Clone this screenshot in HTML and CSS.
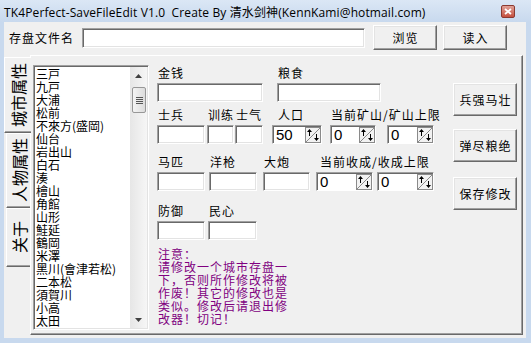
FILE: index.html
```html
<!DOCTYPE html>
<html lang="zh">
<head>
    <meta charset="UTF-8">
    <title>TK4Perfect-SaveFileEdit V1.0</title>
    <link rel="stylesheet" href="styles.css">
</head>
<body>
    <div class="window">
        <div class="titlebar">
            <span class="title">TK4Perfect-SaveFileEdit V1.0&nbsp; Create By 清水剑神(KennKami@hotmail.com)</span>
            <span class="close-btn">
                <svg width="8" height="7" viewBox="0 0 8 7"><path d="M1 1L7 6M7 1L1 6" stroke="#fff" stroke-width="1.8"/></svg>
            </span>
        </div>

        <div class="client">
            <div class="file-row">
                <label class="file-label" for="save-file">存盘文件名</label>
                <input type="text" id="save-file" class="edit file-edit">
                <button class="btn btn-top">浏览</button>
                <button class="btn btn-top">读入</button>
            </div>

            <div class="tab-control">
                <div class="tab-strip">
                    <div class="tab tab-city active"><span>城市属性</span></div>
                    <div class="tab tab-person"><span>人物属性</span></div>
                    <div class="tab tab-about"><span>关于</span></div>
                </div>

                <div class="tab-page">
                    <div class="listbox">
                        <ul class="city-list">
                            <li>三戸</li>
                            <li>九戸</li>
                            <li>大浦</li>
                            <li>松前</li>
                            <li>不來方(盛岡)</li>
                            <li>仙台</li>
                            <li>岩出山</li>
                            <li>白石</li>
                            <li>湊</li>
                            <li>檜山</li>
                            <li>角館</li>
                            <li>山形</li>
                            <li>鮭延</li>
                            <li>鶴岡</li>
                            <li>米澤</li>
                            <li>黑川(會津若松)</li>
                            <li>二本松</li>
                            <li>須賀川</li>
                            <li>小高</li>
                            <li>太田</li>
                        </ul>
                        <div class="vscroll">
                            <div class="sb-arrow">
                                <svg width="7" height="4" viewBox="0 0 7 4"><path d="M0 4L3.5 0L7 4Z" fill="#404040"/></svg>
                            </div>
                            <div class="sb-track">
                                <div class="sb-thumb">
                                    <svg width="7" height="7" viewBox="0 0 7 7"><path d="M0 0.5H7M0 2.5H7M0 4.5H7M0 6.5H7" stroke="#555"/></svg>
                                </div>
                            </div>
                            <div class="sb-arrow">
                                <svg width="7" height="4" viewBox="0 0 7 4"><path d="M0 0L3.5 4L7 0Z" fill="#404040"/></svg>
                            </div>
                        </div>
                    </div>

                    <div class="fields">
                        <div class="field-row row-a">
                            <div class="field f-money"><label>金钱</label><input type="text" class="edit"></div>
                            <div class="field f-food"><label>粮食</label><input type="text" class="edit"></div>
                        </div>

                        <div class="field-row row-b">
                            <div class="field f-soldier"><label>士兵</label><input type="text" class="edit"></div>
                            <div class="field f-train"><label>训练</label><input type="text" class="edit"></div>
                            <div class="field f-morale"><label>士气</label><input type="text" class="edit"></div>
                            <div class="field f-people">
                                <label>人口</label>
                                <div class="spin"><span class="spin-value">50</span><svg class="spin-btn" width="16" height="16" viewBox="0 0 16 16"><rect x="0.5" y="0.5" width="15" height="15" fill="#f2f2f2" stroke="#8a8a8a"/><path d="M1 15L15 1" stroke="#8a8a8a"/><path d="M4.5 2L2 5H4V9H5V5H7Z" fill="#000"/><path d="M11.5 14L14 11H12V7H11V11H9Z" fill="#000"/></svg></div>
                            </div>
                            <div class="field f-mine">
                                <label>当前矿山/矿山上限</label>
                                <div class="spin-pair">
                                    <div class="spin spin-mine"><span class="spin-value">0</span><svg class="spin-btn" width="16" height="16" viewBox="0 0 16 16"><rect x="0.5" y="0.5" width="15" height="15" fill="#f2f2f2" stroke="#8a8a8a"/><path d="M1 15L15 1" stroke="#8a8a8a"/><path d="M4.5 2L2 5H4V9H5V5H7Z" fill="#000"/><path d="M11.5 14L14 11H12V7H11V11H9Z" fill="#000"/></svg></div>
                                    <div class="spin spin-mine"><span class="spin-value">0</span><svg class="spin-btn" width="16" height="16" viewBox="0 0 16 16"><rect x="0.5" y="0.5" width="15" height="15" fill="#f2f2f2" stroke="#8a8a8a"/><path d="M1 15L15 1" stroke="#8a8a8a"/><path d="M4.5 2L2 5H4V9H5V5H7Z" fill="#000"/><path d="M11.5 14L14 11H12V7H11V11H9Z" fill="#000"/></svg></div>
                                </div>
                            </div>
                        </div>

                        <div class="field-row row-c">
                            <div class="field f-horse"><label>马匹</label><input type="text" class="edit"></div>
                            <div class="field f-gun"><label>洋枪</label><input type="text" class="edit"></div>
                            <div class="field f-cannon"><label>大炮</label><input type="text" class="edit"></div>
                            <div class="field f-harvest">
                                <label>当前收成/收成上限</label>
                                <div class="spin-pair">
                                    <div class="spin spin-harvest"><span class="spin-value">0</span><svg class="spin-btn" width="16" height="16" viewBox="0 0 16 16"><rect x="0.5" y="0.5" width="15" height="15" fill="#f2f2f2" stroke="#8a8a8a"/><path d="M1 15L15 1" stroke="#8a8a8a"/><path d="M4.5 2L2 5H4V9H5V5H7Z" fill="#000"/><path d="M11.5 14L14 11H12V7H11V11H9Z" fill="#000"/></svg></div>
                                    <div class="spin spin-harvest"><span class="spin-value">0</span><svg class="spin-btn" width="16" height="16" viewBox="0 0 16 16"><rect x="0.5" y="0.5" width="15" height="15" fill="#f2f2f2" stroke="#8a8a8a"/><path d="M1 15L15 1" stroke="#8a8a8a"/><path d="M4.5 2L2 5H4V9H5V5H7Z" fill="#000"/><path d="M11.5 14L14 11H12V7H11V11H9Z" fill="#000"/></svg></div>
                                </div>
                            </div>
                        </div>

                        <div class="field-row row-d">
                            <div class="field f-defense"><label>防御</label><input type="text" class="edit"></div>
                            <div class="field f-loyalty"><label>民心</label><input type="text" class="edit"></div>
                        </div>

                        <p class="notice">注意：<br>请修改一个城市存盘一下，否则所作修改将被作废！其它的修改也是类似。修改后请退出修改器！切记！</p>
                    </div>

                    <div class="actions">
                        <button class="btn btn-side">兵强马壮</button>
                        <button class="btn btn-side">弹尽粮绝</button>
                        <button class="btn btn-side btn-save">保存修改</button>
                    </div>
                </div>
            </div>
        </div>
    </div>
</body>
</html>
```

FILE: styles.css
```css
* {
    box-sizing: border-box;
}
body {
    margin: 0;
    font-family: "Noto Sans CJK SC", sans-serif;
    font-size: 12px;
    color: #000;
    background: #fff;
}
.window {
    width: 531px;
    height: 343px;
    display: flex;
    flex-direction: column;
    background: #c8d9ee;
    padding: 0 5px 5px 4px;
}
.titlebar {
    height: 22px;
    margin: 0 -5px 0 -4px;
    padding: 1px 16px 0 4px;
    display: flex;
    align-items: center;
    justify-content: space-between;
    background: linear-gradient(#dbe7f5, #c8d9ee);
}
.title {
    font-family: "Open Sans", "Noto Sans CJK SC", sans-serif;
    font-size: 12px;
    letter-spacing: 0.12px;
    white-space: nowrap;
}
.close-btn {
    width: 14px;
    height: 13px;
    display: flex;
    align-items: center;
    justify-content: center;
    border: 1px solid #8b3a31;
    border-radius: 2px;
    background: linear-gradient(#e0a197, #c5503f);
}
.client {
    flex: 1;
    background: #f0f0f0;
}

/* file row */
.file-row {
    height: 25px;
    margin-top: 3px;
    display: flex;
    align-items: center;
}
.file-label {
    width: 78px;
    padding-left: 5px;
    letter-spacing: 1px;
}
.edit {
    height: 19px;
    border: 1px solid;
    border-color: #a0a0a0 #fff #fff #a0a0a0;
    box-shadow: inset 1px 1px 0 #696969, inset -1px -1px 0 #e3e3e3;
    background: #fff;
    padding: 0 3px;
    font: 15px "Liberation Sans", sans-serif;
    outline: none;
}
.file-edit {
    width: 283px;
    height: 20px;
    margin-right: 8px;
}
.btn {
    background: #f0f0f0;
    border: 1px solid;
    border-color: #fff #696969 #696969 #fff;
    box-shadow: inset -1px -1px 0 #a0a0a0, inset 1px 1px 0 #e3e3e3;
    font-family: "Noto Sans CJK SC", sans-serif;
    font-size: 12px;
    letter-spacing: 1px;
    padding: 0 0 0 1px;
    color: #000;
}
.btn-top {
    width: 64px;
    height: 25px;
    margin-right: 6px;
}

/* tab control */
.tab-control {
    height: 280px;
    margin-top: 5px;
    margin-right: 3px;
    display: flex;
}
.tab-strip {
    width: 26px;
    padding-top: 2px;
    display: flex;
    flex-direction: column;
}
.tab {
    margin-left: 2px;
    border-top: 1px solid #fff;
    border-left: 1px solid #fff;
    border-bottom: 1px solid #696969;
    box-shadow: inset 0 -1px 0 #a0a0a0;
    display: flex;
    align-items: center;
    justify-content: center;
}
.tab span {
    writing-mode: vertical-rl;
    text-orientation: sideways;
    transform: rotate(180deg);
    font-size: 16px;
    line-height: 16px;
}
.tab.active {
    position: relative;
    margin-left: 0;
    margin-right: -1px;
    background: #f0f0f0;
}
.tab-city {
    height: 76px;
}
.tab-person {
    height: 75px;
}
.tab-about {
    height: 59px;
}
.tab-page {
    flex: 1;
    display: flex;
    align-items: flex-start;
    padding: 9px 0 0 2px;
    border: 1px solid;
    border-color: #fff #696969 #696969 #fff;
    box-shadow: inset -1px -1px 0 #a0a0a0;
}

/* city list */
.listbox {
    width: 116px;
    height: 265px;
    display: flex;
    padding: 1px;
    border: 1px solid;
    border-color: #a0a0a0 #fff #fff #a0a0a0;
    box-shadow: inset 1px 1px 0 #696969, inset -1px -1px 0 #e3e3e3;
    background: #fff;
}
.city-list {
    flex: 1;
    list-style: none;
    margin: 0;
    padding: 0 0 0 1px;
    overflow: hidden;
}
.city-list li {
    height: 13px;
    line-height: 13px;
    white-space: nowrap;
}
.vscroll {
    width: 17px;
    display: flex;
    flex-direction: column;
    background: linear-gradient(90deg, #e6e6e6, #f6f6f6);
}
.sb-arrow {
    height: 17px;
    display: flex;
    align-items: center;
    justify-content: center;
}
.sb-track {
    flex: 1;
    padding: 3px 1px 0 2px;
}
.sb-thumb {
    height: 26px;
    border: 1px solid #979797;
    border-radius: 2px;
    background: linear-gradient(90deg, #f4f4f4, #dcdcdc);
    display: flex;
    align-items: center;
    justify-content: center;
}

/* fields */
.fields {
    width: 296px;
    margin-left: 8px;
}
.field-row {
    display: flex;
    align-items: flex-end;
}
.row-b {
    margin-top: 5px;
}
.row-c {
    margin-top: 10px;
}
.row-d {
    margin-top: 12px;
}
.field {
    display: flex;
    flex-direction: column;
}
.field label {
    height: 16px;
    line-height: 16px;
    margin-bottom: 2px;
    padding-left: 1px;
    letter-spacing: 1px;
    white-space: nowrap;
}
.field .edit {
    width: 100%;
}
.f-money { width: 106px; }
.f-food { width: 104px; margin-left: 14px; }
.f-soldier { width: 48px; }
.f-train { width: 27px; margin-left: 2px; }
.f-morale { width: 28px; margin-left: 1px; }
.f-people { width: 50px; margin-left: 9px; }
.f-people label { padding-left: 6px; }
.f-mine { margin-left: 8px; }
.f-horse { width: 48px; }
.f-gun { width: 48px; margin-left: 4px; }
.f-cannon { width: 47px; margin-left: 6px; }
.f-harvest { margin-left: 6px; }
.f-harvest label { padding-left: 4px; }
.f-defense { width: 48px; }
.f-loyalty { width: 49px; margin-left: 3px; }

.spin {
    height: 19px;
    display: flex;
    align-items: center;
    border: 1px solid;
    border-color: #a0a0a0 #fff #fff #a0a0a0;
    box-shadow: inset 1px 1px 0 #696969;
    background: #fff;
    padding: 0 0 0 1px;
}
.spin-value {
    flex: 1;
    padding-left: 2px;
    font: 15px "Liberation Sans", sans-serif;
    line-height: 17px;
}
.spin-btn {
    flex: none;
}
.spin-pair {
    display: flex;
}
.spin-mine {
    width: 46px;
}
.spin-mine + .spin-mine {
    width: 47px;
    margin-left: 11px;
}
.spin-harvest {
    width: 57px;
}
.spin-harvest + .spin-harvest {
    margin-left: 4px;
}
.notice {
    width: 132px;
    margin: 7px 0 0 1px;
    color: #800080;
    line-height: 13px;
    letter-spacing: 1px;
}

/* right buttons */
.actions {
    width: 64px;
    padding-top: 18px;
    display: flex;
    flex-direction: column;
}
.btn-side {
    height: 33px;
    margin-bottom: 13px;
}
.btn-save {
    margin-top: 2px;
}
```
